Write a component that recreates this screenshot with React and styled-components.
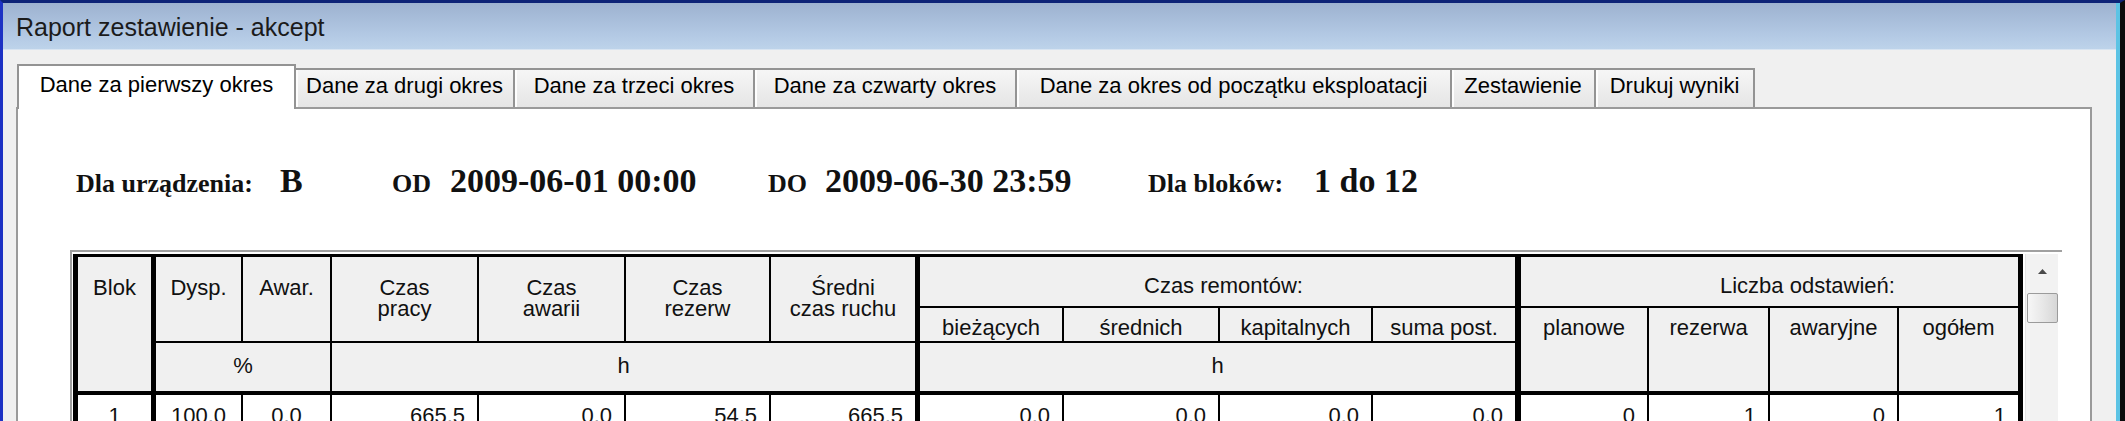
import React from "react";
import styled, { createGlobalStyle } from "styled-components";

const GlobalStyle = createGlobalStyle`
  html, body {
    margin: 0;
    padding: 0;
    background: #f0f0f0;
    overflow: hidden;
  }
  * {
    box-sizing: border-box;
  }
`;

const SANS = `"Liberation Sans", Arial, sans-serif`;
const SERIF = `"Liberation Serif", "Times New Roman", serif`;

const tabs = [
  { label: "Dane za pierwszy okres", w: 279, active: true },
  { label: "Dane za drugi okres", w: 219 },
  { label: "Dane za trzeci okres", w: 240 },
  { label: "Dane za czwarty okres", w: 262 },
  { label: "Dane za okres od początku eksploatacji", w: 435 },
  { label: "Zestawienie", w: 144 },
  { label: "Drukuj wyniki", w: 159 },
];

const colWidths = [78, 87, 89, 147, 147, 145, 149, 144, 156, 153, 148, 128, 121, 129, 124];
const colRight = [5, 2, 2, 2, 2, 2, 5, 2, 2, 2, 6, 2, 2, 2, 5];

const dataRow = [
  { v: "1", align: "center" },
  { v: "100.0", align: "center" },
  { v: "0.0", align: "center" },
  { v: "665.5" },
  { v: "0.0" },
  { v: "54.5" },
  { v: "665.5" },
  { v: "0.0" },
  { v: "0.0" },
  { v: "0.0" },
  { v: "0.0" },
  { v: "0" },
  { v: "1" },
  { v: "0" },
  { v: "1" },
];

const App = () => (
  <>
    <GlobalStyle />
    <Window>
      <Frame>
        <TitleBar>Raport zestawienie - akcept</TitleBar>
        <Body>
          <TabStrip>
            {tabs.map((t) => (
              <Tab key={t.label} $w={t.w} $active={t.active}>
                {t.label}
              </Tab>
            ))}
          </TabStrip>
          <Panel>
            <InfoRow>
              <InfoGroup $w={316}>
                <InfoLabel $w={204}>Dla urządzenia:</InfoLabel>
                <InfoValue>B</InfoValue>
              </InfoGroup>
              <InfoGroup $w={376}>
                <InfoLabel $w={58}>OD</InfoLabel>
                <InfoValue>2009-06-01 00:00</InfoValue>
              </InfoGroup>
              <InfoGroup $w={380}>
                <InfoLabel $w={57}>DO</InfoLabel>
                <InfoValue>2009-06-30 23:59</InfoValue>
              </InfoGroup>
              <InfoGroup>
                <InfoLabel $w={166}>Dla bloków:</InfoLabel>
                <InfoValue>1 do 12</InfoValue>
              </InfoGroup>
            </InfoRow>

            <TableFrame>
              <Grid>
                <Head $col="1" $row="1 / 4" $br={5} $bb={4}>Blok</Head>
                <Head $col="2" $row="1 / 3">Dysp.</Head>
                <Head $col="3" $row="1 / 3">Awar.</Head>
                <Head $col="4" $row="1 / 3">Czas<br />pracy</Head>
                <Head $col="5" $row="1 / 3">Czas<br />awarii</Head>
                <Head $col="6" $row="1 / 3">Czas<br />rezerw</Head>
                <Head $col="7" $row="1 / 3" $br={5}>Średni<br />czas ruchu</Head>
                <Head $col="8 / 12" $row="1" $br={6} $pt={18} $align="left" $pl={224}>
                  Czas remontów:
                </Head>
                <Head $col="12 / 16" $row="1" $br={5} $pt={18} $align="left" $pl={199}>
                  Liczba odstawień:
                </Head>

                <Head $col="8" $row="2" $pt={9}>bieżących</Head>
                <Head $col="9" $row="2" $pt={9}>średnich</Head>
                <Head $col="10" $row="2" $pt={9}>kapitalnych</Head>
                <Head $col="11" $row="2" $pt={9} $br={6}>suma post.</Head>
                <Head $col="12" $row="2 / 4" $pt={9} $bb={4}>planowe</Head>
                <Head $col="13" $row="2 / 4" $pt={9} $bb={4}>rezerwa</Head>
                <Head $col="14" $row="2 / 4" $pt={9} $bb={4}>awaryjne</Head>
                <Head $col="15" $row="2 / 4" $pt={9} $bb={4} $br={5}>ogółem</Head>

                <UnitCell $col="2 / 4" $br={2}>%</UnitCell>
                <UnitCell $col="4 / 8" $br={5}>h</UnitCell>
                <UnitCell $col="8 / 12" $br={6}>h</UnitCell>

                {dataRow.map((c, i) => (
                  <DataCell key={i} $br={colRight[i]} $align={c.align || "right"}>
                    {c.v}
                  </DataCell>
                ))}
              </Grid>
              <ScrollBar>
                <ScrollButton>
                  <svg width="9" height="5" viewBox="0 0 9 5">
                    <polygon points="0,5 4.5,0 9,5" fill="#4a4a4a" />
                  </svg>
                </ScrollButton>
                <ScrollThumb />
              </ScrollBar>
            </TableFrame>
          </Panel>
        </Body>
      </Frame>
    </Window>
  </>
);

export default App;

const Window = styled.div`
  width: 2125px;
  height: 421px;
  display: flex;
  flex-direction: column;
  border-top: 3px solid #0d2377;
  border-left: 3px solid #1d32c4;
  border-right: 5px solid #0b0b0b;
  overflow: hidden;
`;

const Frame = styled.div`
  flex: 1;
  min-height: 0;
  display: flex;
  flex-direction: column;
  border-right: 4px solid #5cc3e4;
`;

const TitleBar = styled.div`
  flex: none;
  height: 47px;
  padding: 12px 0 0 13px;
  background: linear-gradient(#9db2d0, #b3c9e4 70%, #bdd3ea);
  border-bottom: 1px solid #d8e4f1;
  font-family: ${SANS};
  font-size: 25px;
  line-height: 25px;
  color: #1b1b1b;
`;

const Body = styled.div`
  flex: 1;
  min-height: 0;
  display: flex;
  flex-direction: column;
  background: #f0f0f0;
  padding: 14px 24px 0 13px;
`;

const TabStrip = styled.div`
  position: relative;
  z-index: 1;
  display: flex;
  align-items: flex-end;
  height: 45px;
  padding-left: 1px;
  margin-bottom: -2px;
`;

const Tab = styled.div`
  flex: none;
  width: ${(p) => p.$w}px;
  height: ${(p) => (p.$active ? 45 : 39)}px;
  margin-bottom: ${(p) => (p.$active ? 0 : 2)}px;
  padding-top: ${(p) => (p.$active ? 8 : 5)}px;
  text-align: center;
  white-space: nowrap;
  font-family: ${SANS};
  font-size: 22px;
  line-height: 22px;
  color: #000;
  background: ${(p) => (p.$active ? "#fff" : "linear-gradient(#f6f6f6, #e5e5e5)")};
  border: 2px solid #939393;
  border-bottom: none;
  border-left-width: ${(p) => (p.$active ? 2 : 0)}px;
  box-shadow: ${(p) => (p.$active ? "none" : "inset 2px 0 0 #fdfdfd")};
`;

const Panel = styled.div`
  flex: 1;
  background: #fff;
  border: 2px solid #9a9a9a;
  border-bottom: none;
`;

const InfoRow = styled.div`
  display: flex;
  align-items: baseline;
  margin: 55px 0 0 58px;
  height: 34px;
  font-family: ${SERIF};
  font-weight: bold;
  color: #111;
`;

const InfoGroup = styled.div`
  flex: none;
  display: flex;
  align-items: baseline;
  width: ${(p) => (p.$w ? `${p.$w}px` : "auto")};
`;

const InfoLabel = styled.span`
  width: ${(p) => p.$w}px;
  font-size: 26px;
  line-height: 34px;
  white-space: nowrap;
`;

const InfoValue = styled.span`
  font-size: 34px;
  line-height: 34px;
  white-space: nowrap;
`;

const TableFrame = styled.div`
  display: flex;
  align-items: flex-start;
  width: 1992px;
  margin: 52px 0 0 52px;
  padding: 2px 0 0 1px;
  border-top: 2px solid #a0a0a0;
  border-left: 2px solid #a0a0a0;
`;

const Grid = styled.div`
  flex: none;
  display: grid;
  grid-template-columns: ${colWidths.map((w) => `${w}px`).join(" ")};
  grid-template-rows: 51px 35px 52px 46px;
  border-left: 5px solid #000;
  border-top: 3px solid #000;
  font-family: ${SANS};
  font-size: 22px;
  line-height: 21px;
  color: #111;
`;

const Head = styled.div`
  grid-column: ${(p) => p.$col};
  grid-row: ${(p) => p.$row};
  background: #f0f0f0;
  border-right: ${(p) => p.$br ?? 2}px solid #000;
  border-bottom: ${(p) => p.$bb ?? 2}px solid #000;
  padding-top: ${(p) => p.$pt ?? 20}px;
  padding-left: ${(p) => p.$pl ?? 0}px;
  text-align: ${(p) => p.$align || "center"};
  white-space: nowrap;
`;

const UnitCell = styled.div`
  grid-column: ${(p) => p.$col};
  grid-row: 3;
  display: flex;
  align-items: center;
  justify-content: center;
  padding-bottom: 4px;
  background: #f0f0f0;
  border-right: ${(p) => p.$br}px solid #000;
  border-bottom: 4px solid #000;
`;

const DataCell = styled.div`
  grid-row: 4;
  background: #fff;
  border-right: ${(p) => p.$br}px solid #000;
  border-bottom: 2px solid #000;
  padding: 10px 12px 0 12px;
  text-align: ${(p) => p.$align};
  white-space: nowrap;
`;

const ScrollBar = styled.div`
  flex: none;
  width: 33px;
  height: 200px;
  margin-left: 2px;
  display: flex;
  flex-direction: column;
  align-items: center;
  background: #f2f2f2;
  border-left: 1px solid #e4e4e4;
`;

const ScrollButton = styled.div`
  width: 100%;
  height: 38px;
  display: flex;
  align-items: center;
  justify-content: center;
  padding-bottom: 4px;
`;

const ScrollThumb = styled.div`
  width: 31px;
  height: 30px;
  margin-top: 1px;
  border: 1px solid #9b9b9b;
  border-radius: 2px;
  background: linear-gradient(90deg, #f7f7f7, #e6e6e6 55%, #d6d6d6);
`;
